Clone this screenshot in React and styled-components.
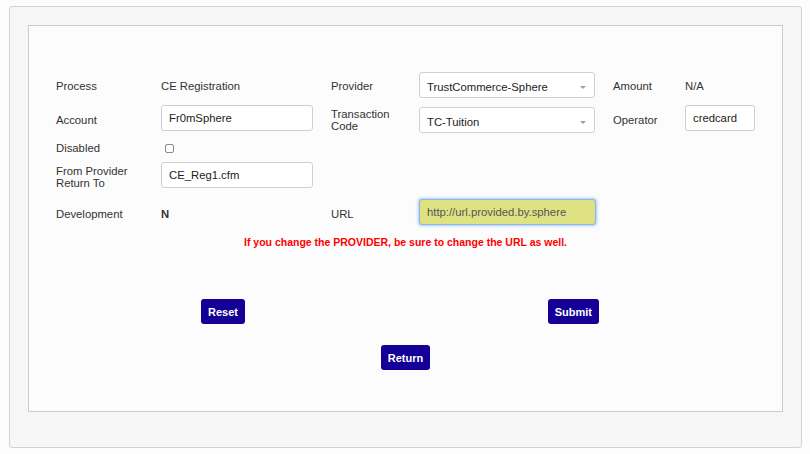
import React from 'react';
import styled, { createGlobalStyle } from 'styled-components';

const GlobalStyle = createGlobalStyle`
  html, body {
    margin: 0;
    padding: 0;
    background: #fcfcfc;
  }
  body {
    font-family: 'Liberation Sans', Arial, sans-serif;
    font-size: 11.3px;
    color: #333;
  }
`;

const Page = styled.div`
  padding: 6px 8px 5px 9px;
`;

const OuterPanel = styled.div`
  background: #f6f6f6;
  border: 1px solid #d2d2d2;
  border-radius: 3px;
  padding: 18px 18px 35px 18px;
`;

const InnerPanel = styled.div`
  background: #fcfcfc;
  border: 1px solid #cccccc;
  padding: 46px 27px 41px 27px;
`;

const FormGrid = styled.div`
  display: grid;
  grid-template-columns: 105px 170px 88px 194px 72px 1fr;
  grid-template-rows: 33px 33px 24px 37px 26px;
  align-items: start;
`;

const Cell = styled.div`
  box-sizing: border-box;
  height: ${(p) => p.$h || 26}px;
  padding-top: ${(p) => p.$pt ?? 1}px;
  display: flex;
  align-items: ${(p) => p.$align || 'center'};
  line-height: 12px;
  color: #333;
  font-weight: ${(p) => (p.$bold ? 700 : 400)};
`;

const TextInput = styled.div`
  box-sizing: border-box;
  width: ${(p) => p.$w}px;
  height: 26px;
  border: 1px solid #cfcfcf;
  border-radius: 3px;
  background: #ffffff;
  padding: 0 7px;
  display: flex;
  align-items: center;
  color: #222;
`;

const UrlInput = styled(TextInput)`
  background: #dee283;
  border-color: #8db6e8;
  box-shadow: 0 0 3px 1px #a9cbf2;
  color: #555;
`;

const SelectBox = styled.div`
  box-sizing: border-box;
  width: 176px;
  height: 26px;
  border: 1px solid #cfcfcf;
  border-radius: 3px;
  background: #ffffff;
  padding: 4px 7px 0 7px;
  display: flex;
  align-items: center;
  color: #222;
`;

const SelectArrow = styled.span`
  margin-left: auto;
  margin-right: 1px;
  width: 0;
  height: 0;
  border-left: 3px solid transparent;
  border-right: 3px solid transparent;
  border-top: 3px solid #a0a0a0;
`;

const Check = styled.span`
  box-sizing: border-box;
  width: 9px;
  height: 9px;
  margin-left: 4px;
  border: 1px solid #8a8a8a;
  border-radius: 2px;
  background: #fff;
`;

const Notice = styled.div`
  margin-top: 11px;
  text-align: center;
  color: #ff0000;
  font-size: 10.5px;
  font-weight: 700;
  line-height: 13px;
`;

const ButtonRow = styled.div`
  display: flex;
  justify-content: ${(p) => p.$justify || 'center'};
  padding: ${(p) => p.$pad || '0'};
  margin-top: ${(p) => p.$mt || 0}px;
`;

const Button = styled.button`
  height: 25px;
  padding: 0 7px;
  border: none;
  border-radius: 3px;
  background: #140097;
  color: #ffffff;
  font-family: 'Liberation Sans', Arial, sans-serif;
  font-size: 11px;
  font-weight: 700;
  cursor: pointer;
`;

const Select = ({ value, align }) => (
  <Cell
    $h={align === 'end' ? 28 : 26}
    $pt={0}
    $align={align === 'end' ? 'flex-end' : 'center'}
  >
    <SelectBox>
      {value}
      <SelectArrow />
    </SelectBox>
  </Cell>
);

export default function App() {
  return (
    <>
      <GlobalStyle />
      <Page>
        <OuterPanel>
          <InnerPanel>
            <FormGrid>
              <Cell>Process</Cell>
              <Cell>CE Registration</Cell>
              <Cell>Provider</Cell>
              <Select value="TrustCommerce-Sphere" />
              <Cell>Amount</Cell>
              <Cell>N/A</Cell>

              <Cell $h={28} $pt={2}>Account</Cell>
              <Cell $h={28} $pt={0} $align="flex-start">
                <TextInput $w={152}>Fr0mSphere</TextInput>
              </Cell>
              <Cell $h={28} $pt={2}>
                Transaction
                <br />
                Code
              </Cell>
              <Select value="TC-Tuition" align="end" />
              <Cell $h={28} $pt={2}>Operator</Cell>
              <Cell $h={28} $pt={0} $align="flex-start">
                <TextInput $w={70}>credcard</TextInput>
              </Cell>

              <Cell $h={20} $pt={0}>Disabled</Cell>
              <Cell $h={20} $pt={0}>
                <Check />
              </Cell>
              <Cell $h={20} />
              <Cell $h={20} />
              <Cell $h={20} />
              <Cell $h={20} />

              <Cell $h={28} $pt={2}>
                From Provider
                <br />
                Return To
              </Cell>
              <Cell $pt={0} $align="flex-start">
                <TextInput $w={152}>CE_Reg1.cfm</TextInput>
              </Cell>
              <Cell />
              <Cell />
              <Cell />
              <Cell />

              <Cell $pt={4}>Development</Cell>
              <Cell $pt={4} $bold>N</Cell>
              <Cell $pt={4}>URL</Cell>
              <Cell $pt={0}>
                <UrlInput $w={177}>http://url.provided.by.sphere</UrlInput>
              </Cell>
              <Cell />
              <Cell />
            </FormGrid>

            <Notice>If you change the PROVIDER, be sure to change the URL as well.</Notice>

            <ButtonRow $justify="space-between" $pad="0 156px 0 145px" $mt={50}>
              <Button>Reset</Button>
              <Button>Submit</Button>
            </ButtonRow>
            <ButtonRow $mt={21}>
              <Button>Return</Button>
            </ButtonRow>
          </InnerPanel>
        </OuterPanel>
      </Page>
    </>
  );
}
